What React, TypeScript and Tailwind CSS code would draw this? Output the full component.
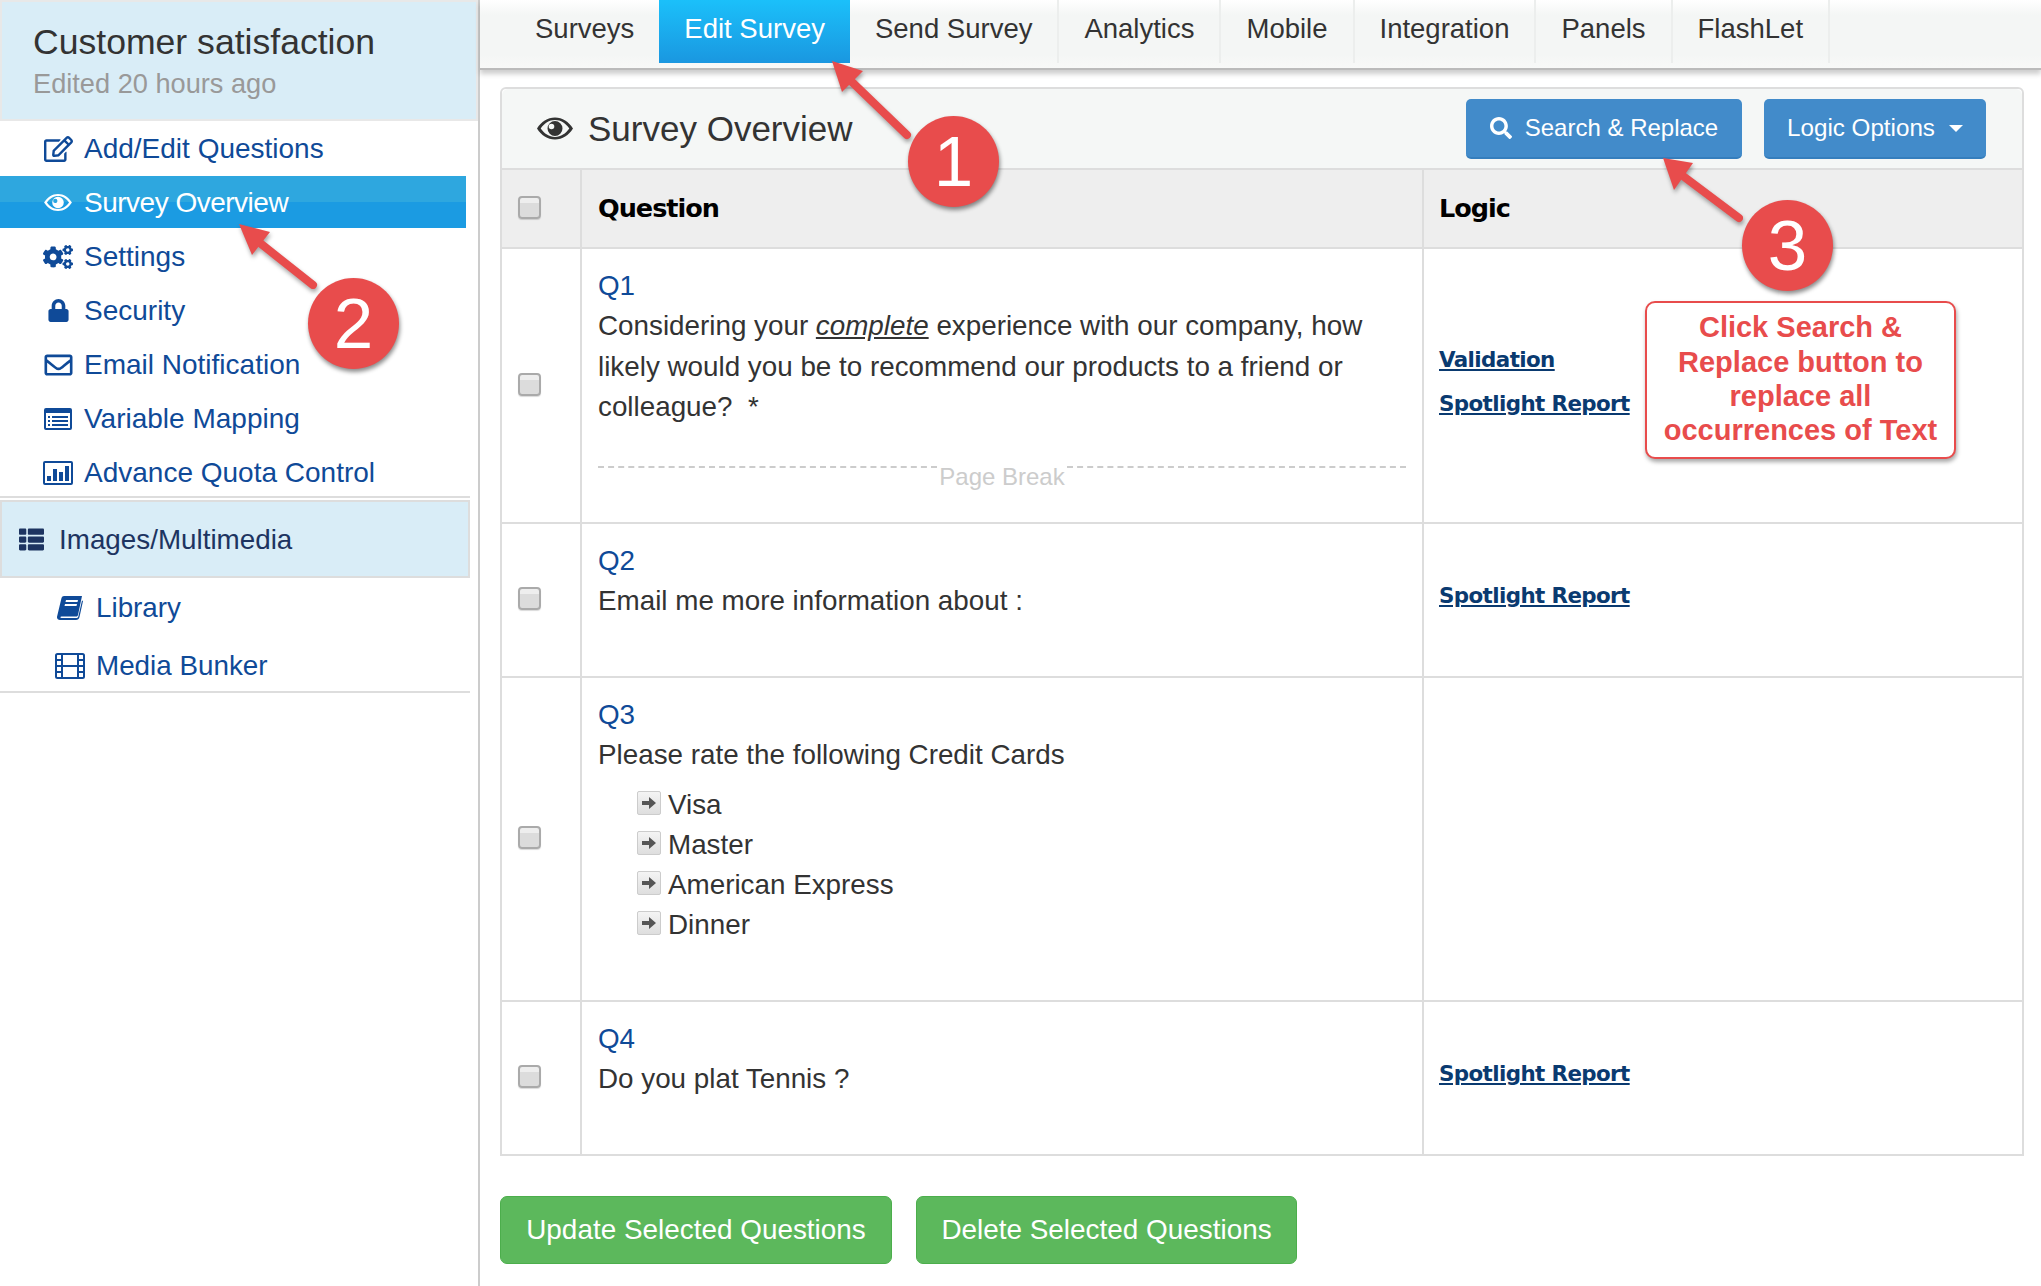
import { FaCogs, FaLock, FaRegEdit, FaRegEnvelope, FaSearch, FaThList } from 'react-icons/fa'

const SANS = "font-['Liberation_Sans',Arial,sans-serif]"

function EyeIcon({ className }: { className: string }) {
  return (
    <svg className={className} viewBox="0 0 36 22" fill="currentColor">
      <path fillRule="evenodd" d="M18 0C10.5 0 4.2 4.2 0 11c4.2 6.800 10.500 11 18 11s13.800-4.200 18-11C31.800 4.200 25.500 0 18 0zM18 2.600c6 0 10.600 3.300 14.300 8.400C28.600 16.100 24 19.400 18 19.400S7.400 16.100 3.700 11C7.400 5.900 12 2.600 18 2.600z" />
      <path fillRule="evenodd" d="M18 3.500a7.500 7.500 0 1 0 0 15 7.500 7.500 0 0 0 0-15zM14.500 6.200a2.800 2.800 0 1 1 0 5.600 2.800 2.800 0 0 1 0-5.600z" />
    </svg>
  )
}

function ListIcon() {
  return (
    <svg className="w-[28px] h-[22px]" viewBox="0 0 28 22" fill="currentColor">
      <path fillRule="evenodd" d="M2 0h24a2 2 0 0 1 2 2v18a2 2 0 0 1-2 2H2a2 2 0 0 1-2-2V2a2 2 0 0 1 2-2zM2 5v15h24V5z" />
      <path d="M4 8h2v2H4zM8 8h16v2H8zM4 12h2v2H4zM8 12h16v2H8zM4 16h2v2H4zM8 16h16v2H8z" />
    </svg>
  )
}

function ChartIcon() {
  return (
    <svg className="w-[30px] h-[24px]" viewBox="0 0 30 24" fill="currentColor">
      <path fillRule="evenodd" d="M2 0h26a2 2 0 0 1 2 2v20a2 2 0 0 1-2 2H2a2 2 0 0 1-2-2V2a2 2 0 0 1 2-2zM2 2v20h26V2z" />
      <path d="M4 15h4v5H4zM10 8h4v12h-4zM16 11h4v9h-4zM22 5h4v15h-4z" />
    </svg>
  )
}

function BookIcon() {
  return (
    <svg className="w-[26px] h-[24px]" viewBox="0 0 26 24" fill="currentColor">
      <path fillRule="evenodd" d="M7 0h18l-4 19c-.3 1-1 1.500-2 1.500H4.500c-1.500 0-1.500 1.500 0 1.500H19c1.200 0 2-.5 2.300-1.500L25 4.500 26 5l-3.500 16c-.4 2-1.800 3-3.500 3H3c-2.500 0-3.500-2-2.800-4L4.500 2C4.900.7 5.800 0 7 0zM9 4l-.5 2h12l.5-2zM8 8l-.5 2h12l.5-2z" />
    </svg>
  )
}

function FilmIcon() {
  return (
    <svg className="w-[30px] h-[26px]" viewBox="0 0 30 26" fill="none" stroke="currentColor" strokeWidth="2">
      <rect x="1" y="1" width="28" height="24" rx="1.500" />
      <path d="M7 1v24M23 1v24M7 13h16M1 7h6M1 13h6M1 19h6M23 7h6M23 13h6M23 19h6" />
    </svg>
  )
}

const menu = [
  { label: 'Add/Edit Questions', icon: <FaRegEdit className="w-[29px] h-[26px]" /> },
  { label: 'Survey Overview', icon: <EyeIcon className="w-[28px] h-[17px]" />, active: true },
  { label: 'Settings', icon: <FaCogs className="w-[30px] h-[26px]" /> },
  { label: 'Security', icon: <FaLock className="w-[21px] h-[23px]" /> },
  { label: 'Email Notification', icon: <FaRegEnvelope className="w-[29px] h-[28px]" /> },
  { label: 'Variable Mapping', icon: <ListIcon /> },
  { label: 'Advance Quota Control', icon: <ChartIcon /> },
]

const tabs = ['Surveys', 'Edit Survey', 'Send Survey', 'Analytics', 'Mobile', 'Integration', 'Panels', 'FlashLet']

function Sidebar() {
  return (
    <aside className="w-[480px] shrink-0 border-r-2 border-[#ccc] h-full">
      <div className="h-[121px] border-2 border-[#e8e8e8] bg-[#d9edf7] pl-[31px] pt-[18px]">
        <div className="text-[35.600px] leading-[44px] text-[#333]">Customer satisfaction</div>
        <div className="text-[27.200px] leading-[38px] mt-[1px] text-[#999]">Edited 20 hours ago</div>
      </div>

      <ul className="pt-[1px] flex flex-col gap-[2px]">
        {menu.map((item) => (
          <li
            key={item.label}
            className={`w-[466px] h-[52px] pt-[1px] flex items-center text-[28px] ${
              item.active
                ? 'bg-[linear-gradient(#2ea7df_0,#2ea7df_50%,#1b9be2_50%,#1b9be2_100%)] text-white tracking-[-0.5px]'
                : 'text-[#0f4a98]'
            }`}
          >
            <span className="w-[84px] pl-[32px] shrink-0 flex justify-center">{item.icon}</span>
            <span>{item.label}</span>
          </li>
        ))}
      </ul>

      <div className="w-[470px] h-[2px] -mt-[2px] bg-[#ddd]" />
      <div className="w-[470px] h-[78px] mt-[2px] pt-[1px] border-2 border-[#ddd] bg-[#d9edf7] flex items-center text-[27.800px] text-[#1d3461] pl-[15px]">
        <FaThList className="w-[29px] h-[25px] shrink-0 mr-[13px]" />
        Images/Multimedia
      </div>

      <ul className="w-[470px] h-[115px] pt-[1px] border-b-2 border-[#ddd] text-[27.800px] text-[#0f4a98]">
        <li className="h-[58px] flex items-center">
          <span className="w-[96px] pl-[57px] shrink-0"><BookIcon /></span>
          Library
        </li>
        <li className="h-[55px] flex items-center pt-[3px]">
          <span className="w-[96px] pl-[55px] shrink-0"><FilmIcon /></span>
          Media Bunker
        </li>
      </ul>
    </aside>
  )
}

function TopTabs() {
  return (
    <nav className="h-[70px] bg-[linear-gradient(#ffffff_0,#f4f6f5_22%,#f4f6f5_80%,#f8f9f8_100%)] border-b-[2px] border-[#bbb] shadow-[0_4px_5px_rgba(0,0,0,0.2)] pl-[30px] flex items-start text-[27.500px] text-[#333]">
      {tabs.map((tab) => (
        <div
          key={tab}
          className={`h-[63px] flex items-center pb-[5px] px-[25px] ${
            tab === 'Edit Survey'
              ? 'bg-[linear-gradient(#1bc0fa,#1a97e0)] text-white'
              : tab === 'Surveys'
                ? ''
                : 'border-r-2 border-[#eceeed]'
          }`}
        >
          {tab}
        </div>
      ))}
    </nav>
  )
}

function CheckBox() {
  return (
    <input
      type="checkbox"
      className="block appearance-none w-[23px] h-[23px] ml-[16px] -mt-[3px] rounded-[4px] border-2 border-[#aaa] bg-[linear-gradient(#eee_0,#eee_25%,#dcdcdc_25%,#dcdcdc_100%)] shadow-[0_1px_1px_rgba(0,0,0,0.15)]"
    />
  )
}

function LogicLink({ children }: { children: string }) {
  return (
    <a className="block h-[44px] leading-[44px] font-['DejaVu_Sans',sans-serif] font-bold text-[21.400px] tracking-[-0.6px] text-[#0a3a70] underline">
      {children}
    </a>
  )
}

function QuestionRow({ height, qid, links, children }: { height: string; qid: string; links: string[]; children: React.ReactNode }) {
  return (
    <tr className={`${height} border-t-2 border-[#ddd]`}>
      <td className="align-middle border-r-2 border-[#ddd]">
        <CheckBox />
      </td>
      <td className="align-top border-r-2 border-[#ddd] pl-[16px] pr-[16px] pt-[17px] text-[27.800px] leading-[40.500px] text-[#333]">
        <div className="text-[#0f4a98] leading-[40px]">{qid}</div>
        {children}
      </td>
      <td className="align-middle pl-[15px] pb-[8px]">
        {links.map((link) => (
          <LogicLink key={link}>{link}</LogicLink>
        ))}
      </td>
    </tr>
  )
}

function ArrowItem({ children }: { children: string }) {
  return (
    <li className="h-[40px] flex items-center">
      <span className="w-[24px] h-[24px] mr-[7px] -mt-[6px] rounded-[2px] border border-[#ccc] bg-[linear-gradient(#f4f4f4,#dedede)] flex items-center justify-center shrink-0">
        <svg className="w-[14px] h-[12px]" viewBox="0 0 14 12" fill="#555">
          <path d="M0 4h7V0l7 6-7 6V8H0z" />
        </svg>
      </span>
      {children}
    </li>
  )
}

function SurveyPanel() {
  return (
    <section className="mt-[17px] ml-[20px] mr-[17px] border-2 border-[#ddd] rounded-t-[6px]">
      <header className="h-[79px] bg-[#f5f7f6] rounded-t-[6px] flex items-center pl-[35px] pr-[36px]">
        <EyeIcon className="w-[36px] h-[23px] text-[#333] mr-[15px]" />
        <h2 className="text-[35px] text-[#333] pt-[1px]">Survey Overview</h2>
        <div className="ml-auto flex gap-[22px] mt-[1px]">
          <button className="w-[276px] h-[60px] rounded-[5px] bg-[#428bca] border-b-2 border-[#357ebd] text-white text-[24px] flex items-center justify-center gap-[13px]">
            <FaSearch className="w-[22px] h-[22px]" />
            Search &amp; Replace
          </button>
          <button className="w-[222px] h-[60px] rounded-[5px] bg-[#428bca] border-b-2 border-[#357ebd] text-white text-[24.200px] flex items-center justify-center gap-[14px]">
            Logic Options
            <span className="w-0 h-0 border-x-[7px] border-t-[7px] border-x-transparent border-t-white" />
          </button>
        </div>
      </header>

      <table className="w-full table-fixed border-collapse">
        <colgroup>
          <col className="w-[79px]" />
          <col className="w-[842px]" />
          <col />
        </colgroup>
        <thead>
          <tr className="h-[79px] bg-[#eee] border-t-2 border-[#ddd] font-['DejaVu_Sans',sans-serif] font-bold text-[25.500px] tracking-[-1px] text-black">
            <th className="align-middle border-r-2 border-[#ddd]"><CheckBox /></th>
            <th className="text-left font-bold pl-[16px] border-r-2 border-[#ddd]">Question</th>
            <th className="text-left font-bold pl-[15px]">Logic</th>
          </tr>
        </thead>
        <tbody>
          <QuestionRow height="h-[275px]" qid="Q1" links={['Validation', 'Spotlight Report']}>
            <p className="w-[800px]">
              Considering your <em className="underline">complete</em> experience with our company, how likely would you be to recommend our products to a friend or colleague?&nbsp; *
            </p>
            <div className="mt-[38px] flex items-start text-[24px] leading-[20px] text-[#ccc]">
              <span className="flex-1 border-t-2 border-dashed border-[#ccc]" />
              <span className="px-[2px] pt-[1px]">Page Break</span>
              <span className="flex-1 border-t-2 border-dashed border-[#ccc]" />
            </div>
          </QuestionRow>
          <QuestionRow height="h-[154px]" qid="Q2" links={['Spotlight Report']}>
            <p>Email me more information about :</p>
          </QuestionRow>
          <QuestionRow height="h-[324px]" qid="Q3" links={[]}>
            <p>Please rate the following Credit Cards</p>
            <ul className="mt-[10px] ml-[39px]">
              {['Visa', 'Master', 'American Express', 'Dinner'].map((card) => (
                <ArrowItem key={card}>{card}</ArrowItem>
              ))}
            </ul>
          </QuestionRow>
          <QuestionRow height="h-[153px]" qid="Q4" links={['Spotlight Report']}>
            <p>Do you plat Tennis ?</p>
          </QuestionRow>
        </tbody>
      </table>
    </section>
  )
}

function Badge({ n, className }: { n: number; className: string }) {
  return (
    <div className={`absolute w-[91px] h-[91px] rounded-full bg-[#e84c4c] text-white text-[71px] leading-[91px] text-center shadow-[1px_3px_4px_rgba(0,0,0,0.45)] ${className}`}>
      {n}
    </div>
  )
}

function Annotations() {
  return (
    <>
      <svg className="absolute left-0 top-0 w-[2041px] h-[1286px] pointer-events-none drop-shadow-[1px_3px_2px_rgba(0,0,0,0.35)]" viewBox="0 0 2041 1286">
        <g fill="#e84c4c" stroke="#e84c4c" strokeWidth="8" strokeLinecap="round">
          <path d="M852 82L907 135" />
          <path d="M260 243L313 285" />
          <path d="M1683 176L1739 218" />
        </g>
        <g fill="#e84c4c">
          <path d="M832 61L863 71L842 92z" />
          <path d="M239 224L270 232L252 255z" />
          <path d="M1663 158L1693 163L1674 190z" />
        </g>
      </svg>
      <Badge n={1} className="left-[908px] top-[116px]" />
      <Badge n={2} className="left-[308px] top-[278px]" />
      <Badge n={3} className="left-[1742px] top-[200px]" />
      <div className="absolute left-[1645px] top-[301px] w-[311px] h-[158px] rounded-[10px] border-2 border-[#e84c4c] bg-white shadow-[1px_3px_4px_rgba(0,0,0,0.35)] flex items-center justify-center text-center text-[29px] leading-[34.300px] font-bold text-[#e84c4c]">
        <span className="-mt-[2px]">Click Search &amp;<br />Replace button to<br />replace all<br />occurrences of Text</span>
      </div>
    </>
  )
}

export default function App() {
  return (
    <div className={`relative w-[2041px] h-[1286px] overflow-hidden bg-white flex ${SANS}`}>
      <Sidebar />
      <main className="flex-1 min-w-0">
        <TopTabs />
        <SurveyPanel />
        <div className="mt-[40px] ml-[20px] flex gap-[24px]">
          <button className="w-[392px] h-[68px] rounded-[7px] bg-[#5cb85c] border border-[#4cae4c] text-white text-[27.900px]">Update Selected Questions</button>
          <button className="w-[381px] h-[68px] rounded-[7px] bg-[#5cb85c] border border-[#4cae4c] text-white text-[27.900px]">Delete Selected Questions</button>
        </div>
      </main>
      <Annotations />
    </div>
  )
}
